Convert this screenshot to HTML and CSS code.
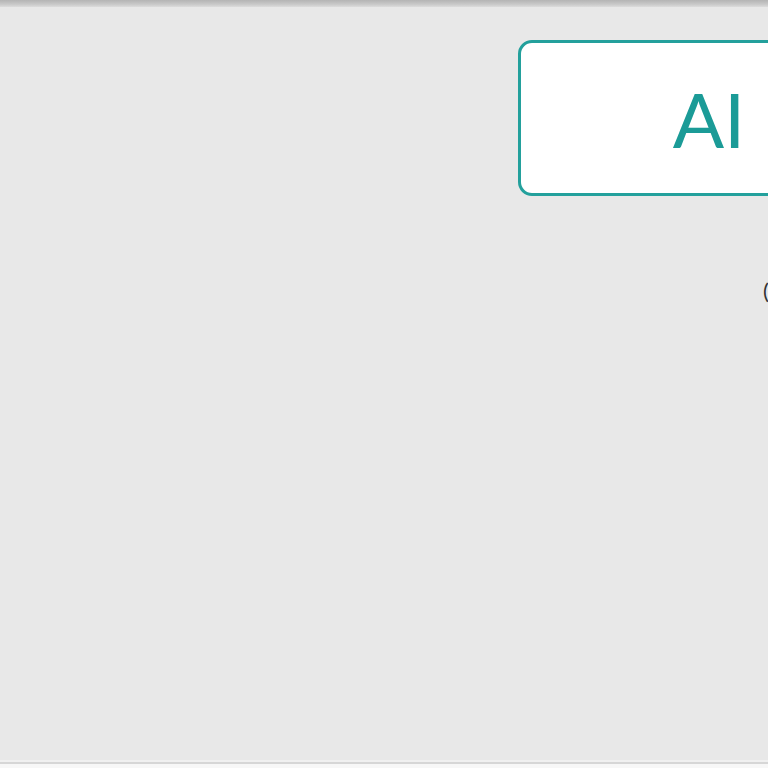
FILE: index.html
```html
<!DOCTYPE html>
<html>
<head>
<meta charset="utf-8">
<link rel="stylesheet" href="styles.css">
</head>
<body>
<div class="topbar"></div>
<main class="canvas">
  <div class="card"><span class="label">AI</span></div>
  <div class="hint">(</div>
</main>
<div class="bottom"></div>
</body>
</html>
```
FILE: styles.css
```css
html, body {
  margin: 0;
  padding: 0;
  background: #f7f7f7;
  font-family: Lato, "Open Sans", sans-serif;
}
body {
  width: 768px;
  height: 768px;
  overflow: hidden;
}
.topbar {
  height: 7px;
  background: linear-gradient(#b4b4b4, #c8c8c8 60%, #dcdcdc);
}
.canvas {
  display: block;
  height: 753px;
  background: #e8e8e8;
  padding: 33px 0 0 518px;
  box-sizing: border-box;
  overflow: hidden;
}
.card {
  width: 382px;
  height: 156px;
  box-sizing: border-box;
  border: 3px solid #23a09c;
  border-radius: 14px;
  background: #ffffff;
  display: flex;
  align-items: center;
  justify-content: center;
}
.label {
  font-size: 76px;
  color: #1b9b97;
  line-height: 1;
  margin-top: 2px;
}
.hint {
  margin: 84px 0 0 245px;
  font-size: 22px;
  color: #333;
  line-height: 1;
}
.bottom {
  height: 2px;
  background: #d6d6d6;
  border-top: 2px solid #f0f0f0;
}
```
